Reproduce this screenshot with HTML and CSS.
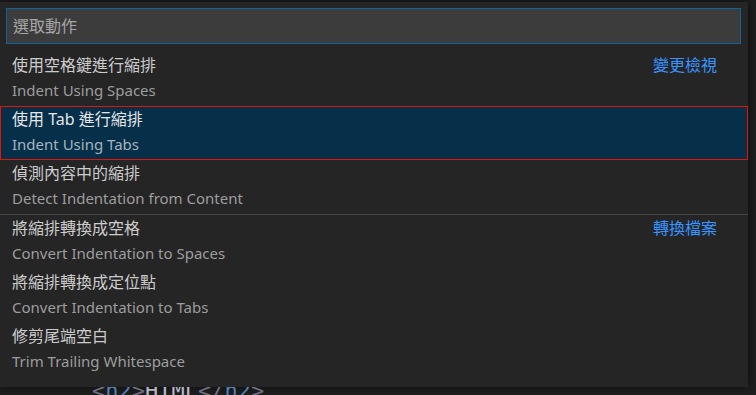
FILE: index.html
```html
<!DOCTYPE html>
<html lang="zh-Hant">
<head>
    <meta charset="UTF-8">
    <title>選取動作</title>
    <link rel="stylesheet" href="styles.css">
</head>
<body>
    <div class="quick-pick">
        <div class="quick-input">選取動作</div>
        <div class="quick-list">
            <div class="pick-row">
                <div class="pick-text">
                    <div class="pick-title">使用空格鍵進行縮排</div>
                    <div class="pick-desc">Indent Using Spaces</div>
                </div>
                <div class="pick-group">變更檢視</div>
            </div>
            <div class="pick-row selected">
                <div class="pick-text">
                    <div class="pick-title">使用 Tab 進行縮排</div>
                    <div class="pick-desc">Indent Using Tabs</div>
                </div>
            </div>
            <div class="pick-row">
                <div class="pick-text">
                    <div class="pick-title">偵測內容中的縮排</div>
                    <div class="pick-desc">Detect Indentation from Content</div>
                </div>
            </div>
            <div class="pick-row separator">
                <div class="pick-text">
                    <div class="pick-title">將縮排轉換成空格</div>
                    <div class="pick-desc">Convert Indentation to Spaces</div>
                </div>
                <div class="pick-group">轉換檔案</div>
            </div>
            <div class="pick-row">
                <div class="pick-text">
                    <div class="pick-title">將縮排轉換成定位點</div>
                    <div class="pick-desc">Convert Indentation to Tabs</div>
                </div>
            </div>
            <div class="pick-row">
                <div class="pick-text">
                    <div class="pick-title">修剪尾端空白</div>
                    <div class="pick-desc">Trim Trailing Whitespace</div>
                </div>
            </div>
        </div>
    </div>

    <div class="editor-strip">
        <div class="code-line"><span class="tag">&lt;</span><span class="name">h2</span><span class="tag">&gt;</span>HTML<span class="tag">&lt;/</span><span class="name">h2</span><span class="tag">&gt;</span></div>
    </div>
</body>
</html>
```

FILE: styles.css
```css
body {
    margin: 0;
    background-color: #1e1e1e;
    font-family: "Noto Sans", "Noto Sans CJK TC", sans-serif;
    overflow: hidden;
}
.quick-pick {
    width: 748px;
    margin-top: 2px;
    padding: 6px 0 10px;
    background-color: #252526;
    box-shadow: 0 0 8px rgba(0,0,0,0.6);
}
.quick-input {
    margin: 0 7px 8px 6px;
    height: 34px;
    line-height: 34px;
    padding-left: 6px;
    background-color: #3c3c3c;
    border: 1px solid #0e639c;
    color: #a6a6a6;
    font-size: 16px;
}
.pick-row {
    display: flex;
    justify-content: space-between;
    height: 54px;
    padding: 0 31px 0 12px;
}
.pick-row.selected {
    background-color: #062f4a;
    outline: 1px solid #e51400;
    outline-offset: -1px;
}
.pick-row.separator {
    border-top: 1px solid #454545;
}
.pick-title {
    height: 26px;
    line-height: 26px;
    font-size: 16px;
    color: #cccccc;
}
.pick-desc {
    height: 28px;
    line-height: 24px;
    font-size: 15px;
    color: #9d9d9d;
}
.selected .pick-title {
    color: #e6e6e6;
}
.selected .pick-desc {
    color: #a7b4bf;
}
.pick-group {
    line-height: 26px;
    font-size: 16px;
    color: #3794ff;
}
.editor-strip {
    height: 8px;
    overflow: hidden;
    padding-left: 92px;
}
.code-line {
    margin-top: -9px;
    font-family: "DejaVu Sans Mono", monospace;
    font-size: 22px;
    line-height: 26px;
    color: #b8b8c8;
}
.tag {
    color: #6e6e80;
}
.name {
    color: #4f7fb8;
}
```
